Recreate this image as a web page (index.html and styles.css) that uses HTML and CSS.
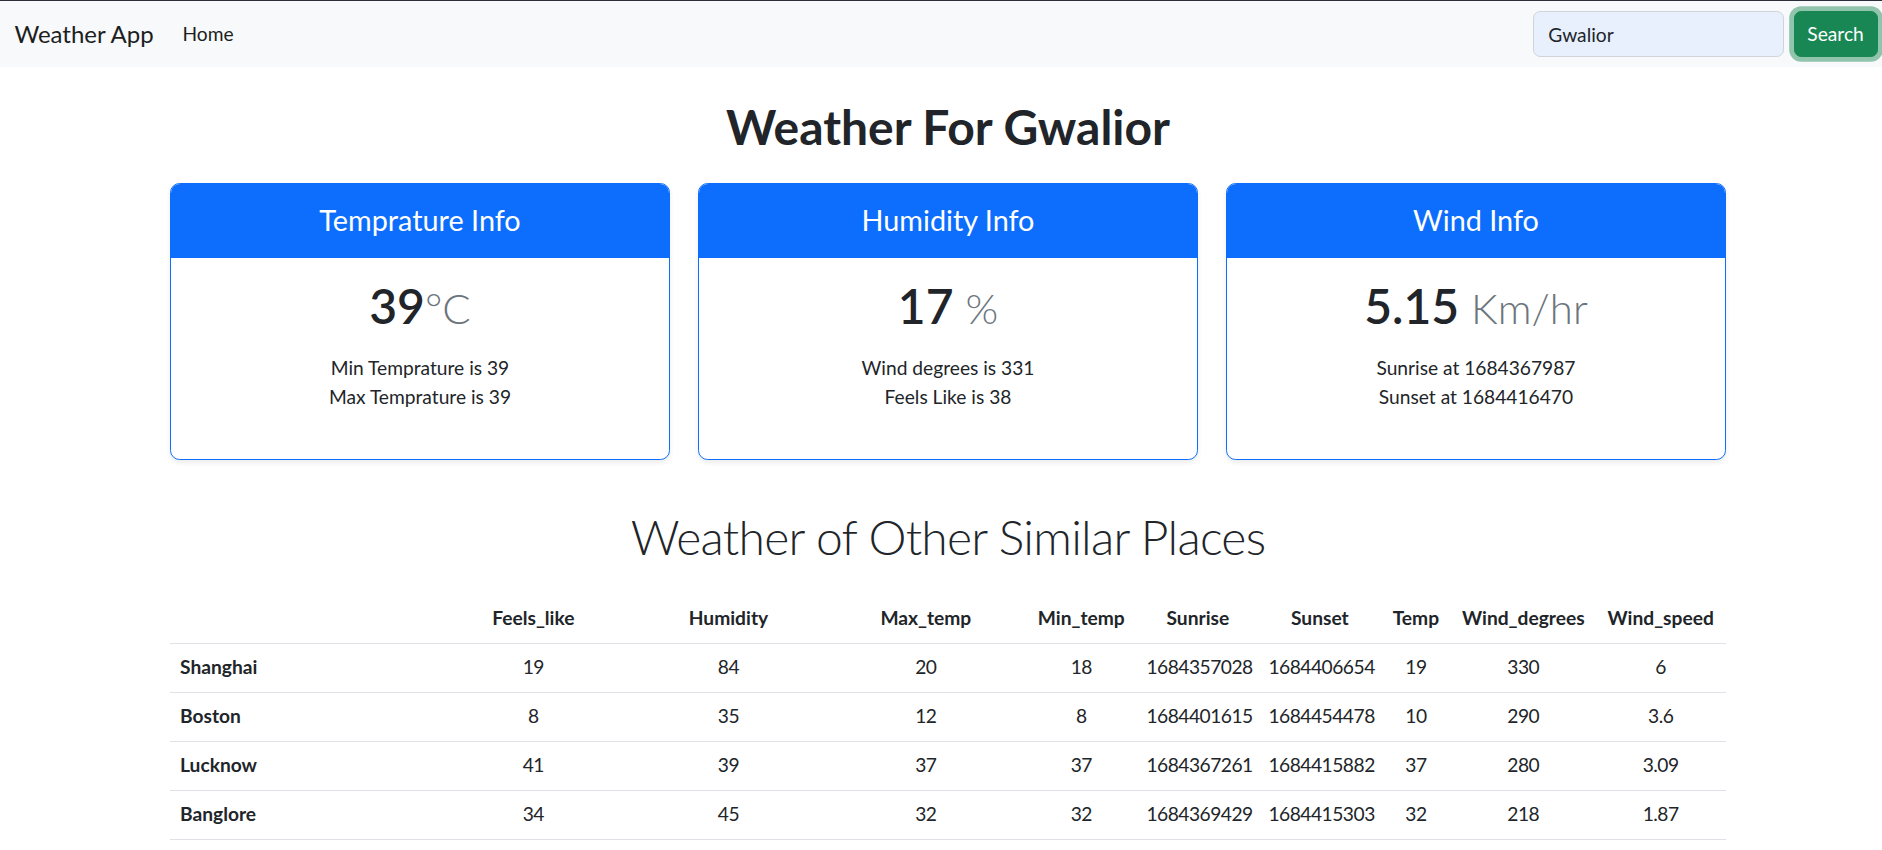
FILE: index.html
```html
<!DOCTYPE html>
<html lang="en">
<head>
<meta charset="utf-8">
<title>Weather App</title>
<link rel="stylesheet" href="styles.css">
</head>
<body>
<nav class="navbar">
  <div class="navbar-left">
    <a class="brand" href="#">Weather App</a>
    <a class="nav-link" href="#">Home</a>
  </div>
  <form class="search-form">
    <input class="search-input" type="search" value="Gwalior" aria-label="Search">
    <button class="search-btn" type="button">Search</button>
  </form>
</nav>
<main class="container">
  <h1 class="page-title">Weather For Gwalior</h1>
  <div class="cards">
    <div class="card">
      <div class="card-header"><h4 class="card-head-title">Temprature Info</h4></div>
      <div class="card-body">
        <h1 class="card-value">39<small class="unit">°C</small></h1>
        <ul class="card-list">
          <li>Min Temprature is 39</li>
          <li>Max Temprature is 39</li>
        </ul>
      </div>
    </div>
    <div class="card">
      <div class="card-header"><h4 class="card-head-title">Humidity Info</h4></div>
      <div class="card-body">
        <h1 class="card-value">17 <small class="unit">%</small></h1>
        <ul class="card-list">
          <li>Wind degrees is 331</li>
          <li>Feels Like is 38</li>
        </ul>
      </div>
    </div>
    <div class="card">
      <div class="card-header"><h4 class="card-head-title">Wind Info</h4></div>
      <div class="card-body">
        <h1 class="card-value">5.15 <small class="unit">Km/hr</small></h1>
        <ul class="card-list">
          <li>Sunrise at 1684367987</li>
          <li>Sunset at 1684416470</li>
        </ul>
      </div>
    </div>
  </div>
  <h2 class="section-title">Weather of Other Similar Places</h2>
  <table class="data-table">
    <colgroup>
      <col class="c-city">
      <col class="c-feels">
      <col class="c-hum">
      <col class="c-max">
      <col class="c-min">
      <col class="c-sunrise">
      <col class="c-sunset">
      <col class="c-temp">
      <col class="c-wdeg">
      <col class="c-wspd">
    </colgroup>
    <thead>
      <tr>
        <th></th>
        <th>Feels_like</th>
        <th>Humidity</th>
        <th>Max_temp</th>
        <th>Min_temp</th>
        <th>Sunrise</th>
        <th>Sunset</th>
        <th>Temp</th>
        <th>Wind_degrees</th>
        <th>Wind_speed</th>
      </tr>
    </thead>
    <tbody>
      <tr>
        <th class="row-head">Shanghai</th>
        <td>19</td><td>84</td><td>20</td><td>18</td><td>1684357028</td><td>1684406654</td><td>19</td><td>330</td><td>6</td>
      </tr>
      <tr>
        <th class="row-head">Boston</th>
        <td>8</td><td>35</td><td>12</td><td>8</td><td>1684401615</td><td>1684454478</td><td>10</td><td>290</td><td>3.6</td>
      </tr>
      <tr>
        <th class="row-head">Lucknow</th>
        <td>41</td><td>39</td><td>37</td><td>37</td><td>1684367261</td><td>1684415882</td><td>37</td><td>280</td><td>3.09</td>
      </tr>
      <tr>
        <th class="row-head">Banglore</th>
        <td>34</td><td>45</td><td>32</td><td>32</td><td>1684369429</td><td>1684415303</td><td>32</td><td>218</td><td>1.87</td>
      </tr>
    </tbody>
  </table>
</main>
</body>
</html>
```

FILE: styles.css
```css
* {
  box-sizing: border-box;
}

html,
body {
  margin: 0;
  padding: 0;
}

body {
  font-family: Lato, "Open Sans", sans-serif;
  font-size: 19.2px;
  line-height: 28.8px;
  color: #212529;
  background: #ffffff;
  overflow: hidden;
}

/* ---------- navbar ---------- */
.navbar {
  display: flex;
  align-items: center;
  justify-content: space-between;
  height: 67.2px;
  padding: 0 4.4px 0 14.4px;
  background: #f8f9fa;
  border-top: 1px solid #2b2f3b;
}

.navbar-left {
  display: flex;
  align-items: center;
}

.brand {
  font-size: 24px;
  line-height: 36px;
  padding: 6px 0;
  margin-right: 19.2px;
  color: #1c1e21;
  text-decoration: none;
}

.nav-link {
  font-size: 19.2px;
  line-height: 28.8px;
  padding: 9.6px;
  color: #1c1e21;
  text-decoration: none;
}

.search-form {
  display: flex;
  align-items: center;
  gap: 9.6px;
}

.search-input {
  width: 251px;
  height: 45.6px;
  padding: 7.2px 14.4px;
  font-family: inherit;
  font-size: 19.2px;
  color: #212529;
  background: #e8f0fe;
  border: 1px solid #ced4da;
  border-radius: 7.2px;
  outline: none;
}

.search-btn {
  height: 45.6px;
  padding: 7.2px 12.8px;
  font-family: inherit;
  font-size: 19.2px;
  line-height: 28.8px;
  color: #ffffff;
  background: #198754;
  border: 1px solid #198754;
  border-radius: 7.2px;
  box-shadow: 0 0 0 4.8px rgba(60, 153, 110, 0.55);
}

/* ---------- main ---------- */
.container {
  box-sizing: content-box;
  width: 1555.2px;
  margin: 0 auto;
  padding-left: 14px;
}

.page-title {
  font-size: 48px;
  line-height: 57.6px;
  font-weight: 700;
  text-align: center;
  margin: 31px 0 27.5px;
}

.cards {
  display: grid;
  grid-template-columns: repeat(3, 1fr);
  column-gap: 28.8px;
}

.card {
  border: 1px solid #0d6efd;
  border-radius: 9.6px;
  overflow: hidden;
  box-shadow: 0 2.4px 4.8px rgba(0, 0, 0, 0.075);
  margin-bottom: 28.8px;
  background: #ffffff;
}

.card-header {
  background: #0d6efd;
  color: #ffffff;
  padding: 19.2px;
  text-align: center;
  border-bottom: 1px solid #0d6efd;
}

.card-head-title {
  margin: 0;
  font-size: 28.8px;
  line-height: 34.56px;
  font-weight: 400;
}

.card-body {
  padding: 19.2px;
  text-align: center;
}

.card-value {
  margin: 0;
  height: 57.6px;
  font-size: 48px;
  line-height: 1.2;
  font-weight: 600;
}

.unit {
  font-size: 42px;
  line-height: 1;
  font-weight: 300;
  color: #6c757d;
}

.card-list {
  list-style: none;
  padding: 0;
  margin: 19.2px 0 28.4px;
}

.section-title {
  font-size: 48px;
  line-height: 57.6px;
  font-weight: 300;
  letter-spacing: -0.75px;
  text-align: center;
  margin: 19.1px 0 28.8px;
}

/* ---------- table ---------- */
.data-table {
  width: 100%;
  border-collapse: collapse;
  table-layout: fixed;
}

.c-city { width: 265.4px; }
.c-feels { width: 195px; }
.c-hum { width: 195.2px; }
.c-max { width: 199.6px; }
.c-min { width: 111.2px; }
.c-sunrise { width: 122px; }
.c-sunset { width: 122px; }
.c-temp { width: 70px; }
.c-wdeg { width: 144.8px; }
.c-wspd { width: 129.8px; }

.data-table th,
.data-table td {
  padding: 9.6px;
  line-height: 28.8px;
  border-bottom: 1px solid #dee2e6;
  text-align: center;
  white-space: nowrap;
  color: #212529;
}

.data-table th {
  font-weight: 700;
}

.data-table td {
  font-weight: 400;
  letter-spacing: -0.5px;
}

.data-table .row-head {
  text-align: left;
}
```
